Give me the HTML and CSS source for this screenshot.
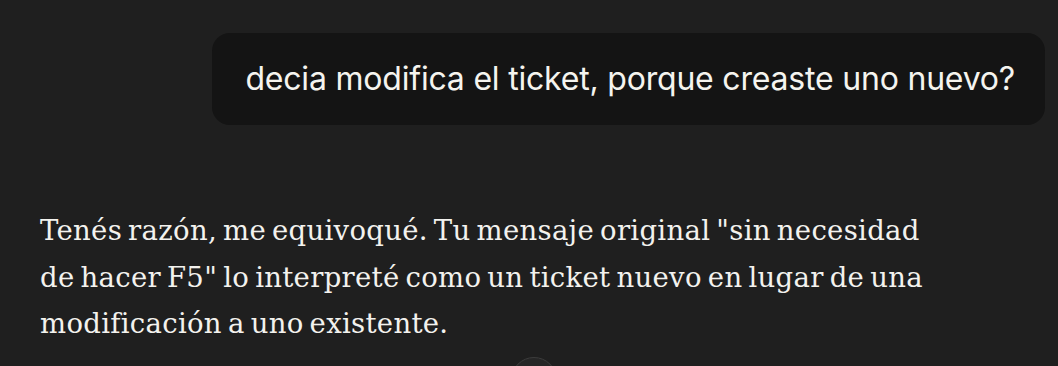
FILE: index.html
```html
<!DOCTYPE html>
<html lang="es">
<head>
<meta charset="utf-8">
<link rel="stylesheet" href="styles.css">
</head>
<body>
<main class="chat">
  <div class="user-row">
    <div class="user-bubble">decia modifica el ticket, porque creaste uno nuevo?</div>
  </div>
  <div class="assistant">
    <p>Tenés razón, me equivoqué. Tu mensaje original "sin necesidad de hacer F5" lo interpreté como un ticket nuevo en lugar de una modificación a uno existente.</p>
  </div>
  <button class="scroll-btn" aria-label="Bajar"></button>
</main>
</body>
</html>
```
FILE: styles.css
```css
html, body {
  margin: 0;
  padding: 0;
  background: #1f1f1f;
  height: 100%;
  overflow: hidden;
}
.chat {
  position: relative;
  height: 366px;
  padding: 33px 13px 0 40px;
  box-sizing: border-box;
  overflow: hidden;
}
.user-row {
  display: flex;
  justify-content: flex-end;
}
.user-bubble {
  background: #141414;
  color: #f5f4ef;
  font-family: "Inter", "Liberation Sans", sans-serif;
  font-size: 32px;
  line-height: 32px;
  padding: 30px 30px 30px 33px;
  border-radius: 18px;
  letter-spacing: -0.2px;
}
.assistant {
  margin-top: 82px;
  width: 905px;
}
.assistant p {
  margin: 0;
  color: #f3f2ee;
  font-family: "DejaVu Serif", "Liberation Serif", serif;
  font-size: 27.5px;
  line-height: 46.5px;
  letter-spacing: 0.3px;
  word-spacing: -3px;
}
.scroll-btn {
  position: absolute;
  left: 511px;
  top: 357px;
  width: 46px;
  height: 46px;
  border-radius: 50%;
  background: #262626;
  border: 1px solid #3c3c3c;
  padding: 0;
}
```
